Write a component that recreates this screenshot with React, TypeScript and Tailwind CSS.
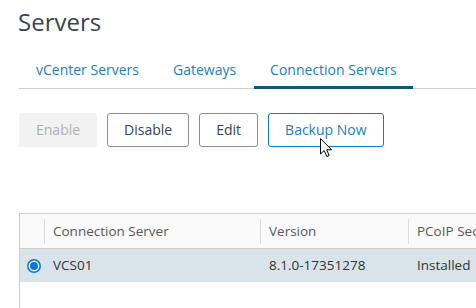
import React from "react";

const font = { fontFamily: '"Open Sans", "Noto Sans", sans-serif' };

function Radio() {
  return (
    <svg width="14" height="14" viewBox="0 0 14 14">
      <circle cx="7" cy="7" r="6.2" fill="#ffffff" stroke="#0a74da" strokeWidth="1.6" />
      <circle cx="7" cy="7" r="4" fill="#0a74da" />
    </svg>
  );
}

function Cursor() {
  return (
    <svg width="13" height="20" viewBox="0 0 13 20" className="absolute left-[320px] top-[138px]">
      <path
        d="M0.5 0.5 L0.5 16 L4.2 12.6 L6.8 18.6 L9.2 17.6 L6.7 11.8 L11.6 11.8 Z"
        fill="#ffffff"
        stroke="#000000"
        strokeWidth="1"
        strokeLinejoin="miter"
      />
    </svg>
  );
}

export default function App() {
  return (
    <div className="relative w-[476px] h-[308px] overflow-hidden bg-white" style={font}>
      <div className="pl-[18px] pt-[6px] text-[24px] leading-[32px] text-[#3a4350]">Servers</div>

      <div className="ml-[19px] flex border-b border-[#cccccc] pl-px gap-[2px]">
        <div className="px-4 pt-[22px] pb-[6px] text-[14px] leading-[20px] text-[#1b7ec2] border-b-[3px] border-transparent -mb-px">
          vCenter Servers
        </div>
        <div className="px-4 pt-[22px] pb-[6px] text-[14px] leading-[20px] text-[#1b7ec2] border-b-[3px] border-transparent -mb-px">
          Gateways
        </div>
        <div className="px-4 pt-[22px] pb-[6px] text-[14px] leading-[20px] text-[#1b7ec2] border-b-[3px] border-[#0e5875] -mb-px">
          Connection Servers
        </div>
      </div>

      <div className="ml-[19px] mt-[24px] flex gap-[10px]">
        <div className="px-[17px] py-[7px] text-[14px] leading-[20px] rounded-[3px] bg-[#f2f2f2] text-[#b0b0b0]">
          Enable
        </div>
        <div className="px-4 py-[6px] text-[14px] leading-[20px] rounded-[3px] border border-[#8f8f8f] text-[#3a4350]">
          Disable
        </div>
        <div className="px-4 py-[6px] text-[14px] leading-[20px] rounded-[3px] border border-[#8f8f8f] text-[#3a4350]">
          Edit
        </div>
        <div className="px-4 py-[6px] text-[14px] leading-[20px] rounded-[3px] border border-[#0a80c2] text-[#1b7ec2]">
          Backup Now
        </div>
      </div>

      <div className="ml-[19px] mt-[66px] border-l border-t border-[#cccccc] h-[200px]">
        <div className="grid grid-cols-[24px_216px_148px_1fr] h-[35px] bg-[#fafafa] border-b border-[#cccccc] text-[13.5px] text-[#565656]">
          <div />
          <div className="flex items-center">
            <div className="w-px h-[25px] bg-[#dddddd]" />
            <span className="pl-[8px] whitespace-nowrap">Connection Server</span>
          </div>
          <div className="flex items-center">
            <div className="w-px h-[25px] bg-[#dddddd]" />
            <span className="pl-[8px] whitespace-nowrap">Version</span>
          </div>
          <div className="flex items-center">
            <div className="w-px h-[25px] bg-[#dddddd]" />
            <span className="pl-[8px] whitespace-nowrap">PCoIP Secure Gateway</span>
          </div>
        </div>
        <div className="grid grid-cols-[24px_216px_148px_1fr] h-[33px] bg-[#d9e4ea] text-[13.5px] text-[#333333]">
          <div className="flex items-center pl-[7px]">
            <Radio />
          </div>
          <div className="flex items-center pl-[9px] whitespace-nowrap">VCS01</div>
          <div className="flex items-center pl-[9px] whitespace-nowrap">8.1.0-17351278</div>
          <div className="flex items-center pl-[9px] whitespace-nowrap">Installed</div>
        </div>
      </div>

      <Cursor />
    </div>
  );
}
